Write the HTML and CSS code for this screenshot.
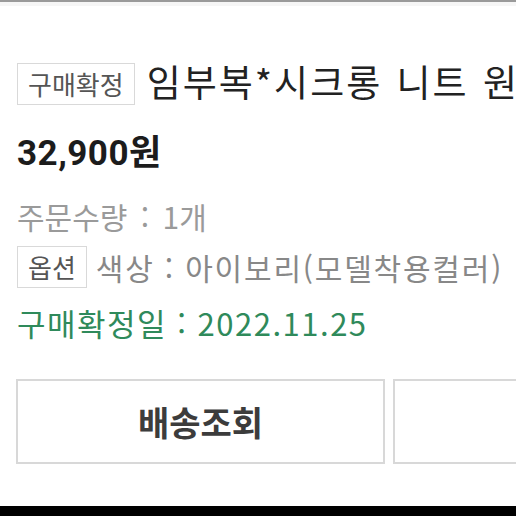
FILE: index.html
```html
<!DOCTYPE html>
<html lang="ko">
<head>
  <meta charset="UTF-8">
  <title>주문 상세</title>
  <link rel="stylesheet" href="styles.css">
</head>
<body>
  <div class="topbar"></div>

  <div class="order">
    <div class="title-row">
      <span class="tag">구매확정</span>
      <h2 class="name">임부복*시크롱 니트 원피스</h2>
    </div>

    <div class="price">32,900원</div>
    <div class="qty">주문수량 : 1개</div>

    <div class="option-row">
      <span class="tag">옵션</span>
      <span class="option">색상 : 아이보리(모델착용컬러)</span>
    </div>

    <div class="confirm">구매확정일 : 2022.11.25</div>

    <div class="buttons">
      <button class="btn">배송조회</button>
      <button class="btn"></button>
    </div>
  </div>

  <div class="bottombar"></div>
</body>
</html>
```

FILE: styles.css
```css
body {
  margin: 0;
  width: 516px;
  height: 516px;
  overflow: hidden;
  background: #fff;
  font-family: "Noto Sans CJK KR", "Noto Sans", sans-serif;
  display: flex;
  flex-direction: column;
}

.topbar {
  height: 2px;
  background: #9a9a9a;
  border-bottom: 4px solid #f6f6f6;
}

.order {
  flex: 1;
  padding: 57px 0 0 17px;
  overflow: hidden;
}

.title-row {
  display: flex;
  align-items: center;
  gap: 12px;
  white-space: nowrap;
}

.tag {
  display: inline-block;
  border: 1px solid #d9d9d9;
  padding: 0 10px;
  height: 40px;
  line-height: 40px;
  font-size: 26px;
  color: #555;
}

.name {
  margin: -6px 0 0 0;
  font-size: 37px;
  font-weight: normal;
  letter-spacing: 2px;
  word-spacing: 2px;
  color: #222;
  line-height: 42px;
}

.price {
  margin-top: 27px;
  font-family: Roboto, "Noto Sans CJK KR", sans-serif;
  font-size: 35px;
  font-weight: bold;
  letter-spacing: 0.5px;
  color: #1c1c1c;
  line-height: 44px;
}

.qty {
  margin-top: 20px;
  font-size: 30px;
  word-spacing: 5px;
  color: #9a9a9a;
  line-height: 40px;
}

.option-row {
  margin-top: 10px;
  display: flex;
  align-items: center;
  gap: 9px;
  white-space: nowrap;
}

.option {
  font-size: 30px;
  letter-spacing: 1.8px;
  color: #888;
  line-height: 42px;
}

.confirm {
  margin-top: 15px;
  font-size: 31px;
  letter-spacing: 1.5px;
  color: #2f8a5b;
  line-height: 40px;
}

.buttons {
  margin-top: 36px;
  margin-left: -1px;
  display: flex;
  gap: 8px;
  width: 760px;
}

.btn {
  flex: 0 0 369px;
  height: 85px;
  background: #fff;
  border: 2px solid #d8d8d8;
  font-family: inherit;
  font-size: 34px;
  font-weight: bold;
  color: #3c3c3c;
}

.bottombar {
  height: 10px;
  background: #000;
}
```
